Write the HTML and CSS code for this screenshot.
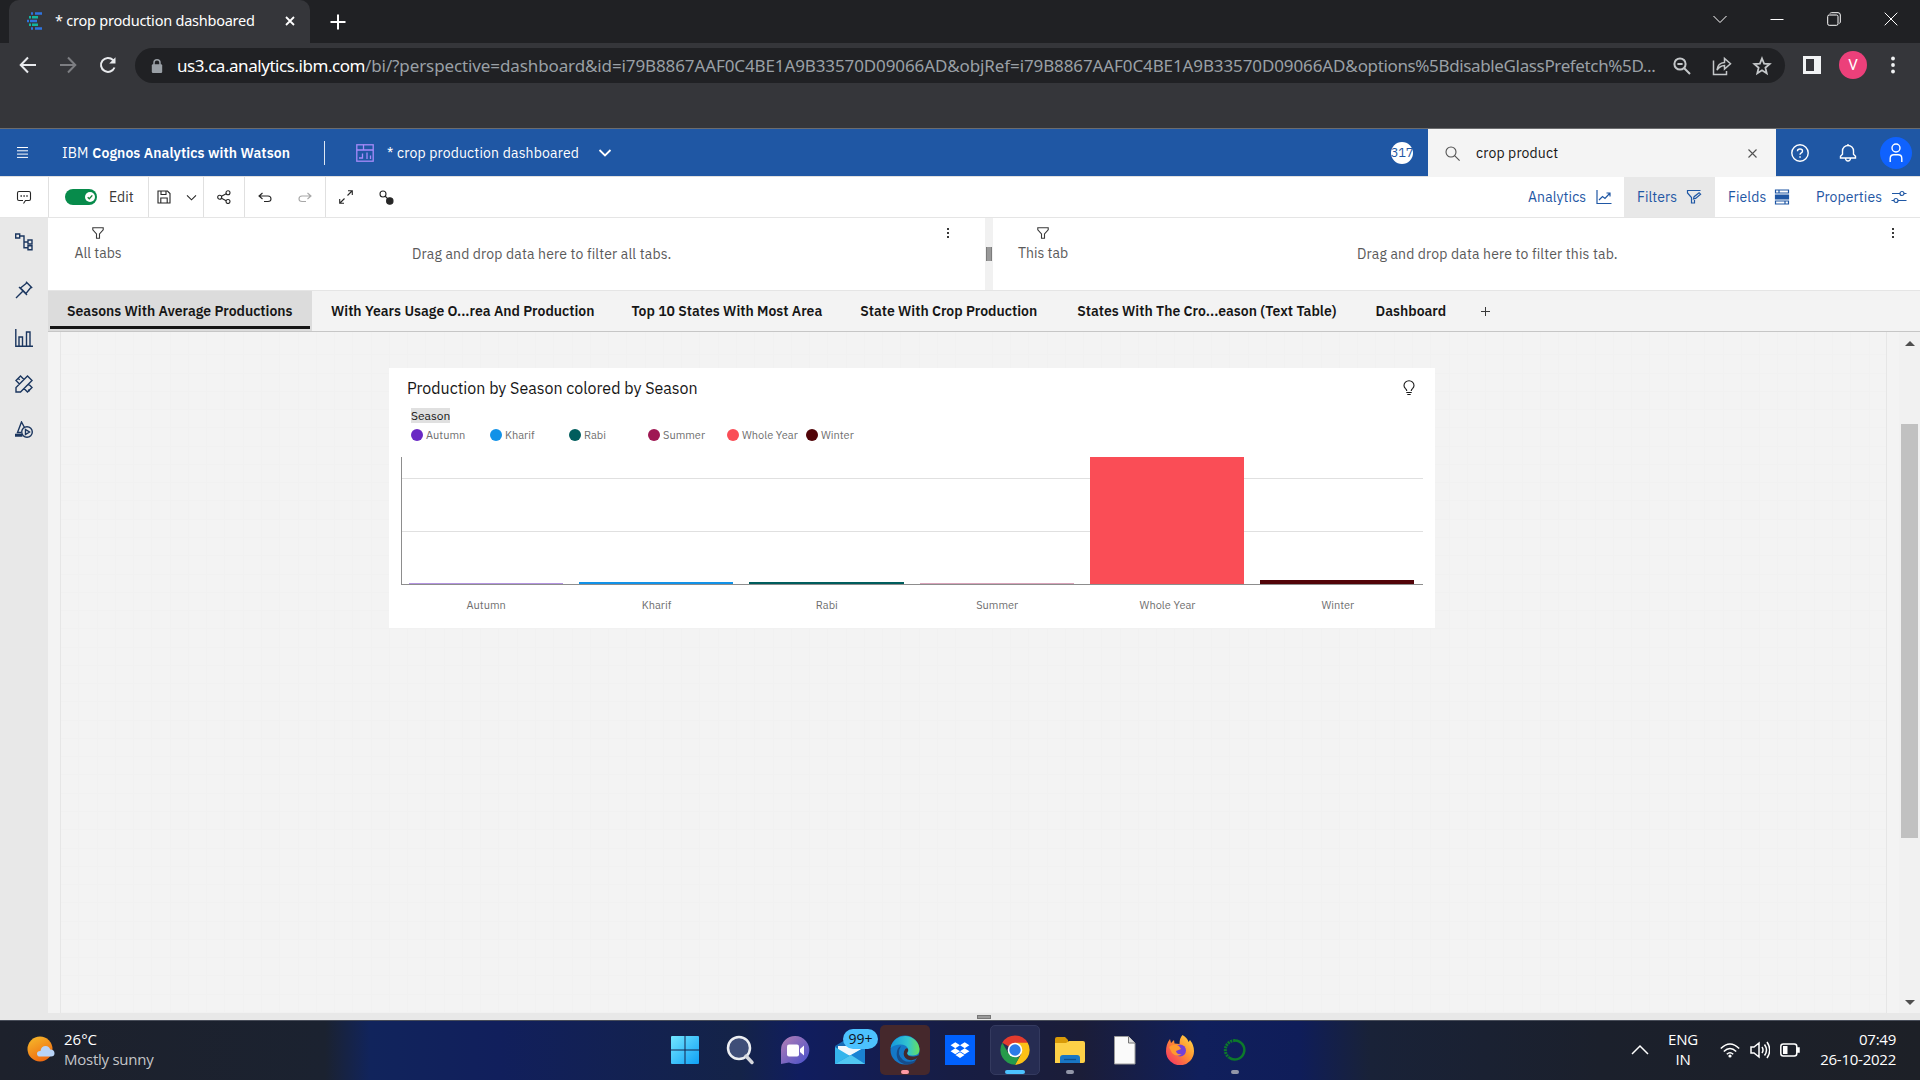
FILE: index.html
```html
<!DOCTYPE html>
<html lang="en">
<head>
<meta charset="utf-8">
<title>* crop production dashboared</title>
<link rel="stylesheet" href="styles.css">
</head>
<body>
<header class="tabstrip">
  <div class="btab">
    <svg class="favicon" width="18" height="18" viewBox="0 0 18 18"><path d="M5 1.500h2M9 1.500h7M5 16.500h2M9 16.500h7M1 9h2M4 9h7" stroke="#2f74e0" stroke-width="2.600"/><path d="M3 5.200h2M6 5.200h6M3 12.800h2M6 12.800h6" stroke="#12b5a0" stroke-width="2.600"/></svg>
    <span class="btab-title"><span class="fit t-title">* crop production dashboared</span></span>
    <svg width="10" height="10" viewBox="0 0 10 10" stroke="#fff" stroke-width="1.800"><path d="M1 1l8 8M9 1l-8 8"/></svg>
  </div>
  <svg class="newtab" width="16" height="16" viewBox="0 0 16 16" stroke="#fff" stroke-width="2"><path d="M8 .5v15M.5 8h15"/></svg>
  <div class="wincontrols">
    <svg width="14" height="14" viewBox="0 0 14 14"><path d="M.5 4l6.500 6.500L13.500 4"/></svg>
    <svg width="14" height="14" viewBox="0 0 14 14"><path d="M.5 7.500h13"/></svg>
    <svg width="14" height="14" viewBox="0 0 14 14"><rect x=".7" y="3" width="10.300" height="10.300" rx="1.500"/><path d="M3 1.500Q3.200.7 4.500.7H11q2.300 0 2.300 2.300v7q0 1-.9 1.400"/></svg>
    <svg width="14" height="14" viewBox="0 0 14 14"><path d="M.7.7l12.600 12.600M13.300.7L.7 13.300"/></svg>
  </div>
</header>
<nav class="addressrow">
  <svg class="nav-back" width="18" height="18" viewBox="0 0 18 18"><path d="M17 9H2M9 1.500L1.700 9 9 16.500"/></svg>
  <svg class="nav-fwd" width="18" height="18" viewBox="0 0 18 18"><path d="M1 9h15M9 1.500L16.300 9 9 16.500"/></svg>
  <svg class="nav-reload" width="18" height="18" viewBox="0 0 18 18"><path d="M15.500 11.500A7 7 0 1 1 14 4l1.500 1.500"/><path d="M16.500 1.200v6.300h-6.300z" fill="#e8eaed" stroke="none"/></svg>
  <div class="omnibox">
    <svg class="lock" width="12" height="14" viewBox="0 0 12 14"><path d="M3 6V3.800a3 3 0 0 1 6 0V6" fill="none" stroke="#9aa0a6" stroke-width="1.500"/><rect x=".8" y="5.300" width="10.400" height="8.700" rx="1.200" fill="#9aa0a6"/></svg>
    <span class="url"><span class="fit t-host">us3.ca.analytics.ibm.com</span><span class="fit t-path">/bi/?perspective=dashboard&amp;id=i79B8867AAF0C4BE1A9B33570D09066AD&amp;objRef=i79B8867AAF0C4BE1A9B33570D09066AD&amp;</span><span class="fit t-opts">options%5BdisableGlassPrefetch%5D...</span></span>
    <div class="omni-icons">
      <svg width="20" height="20" viewBox="0 0 20 20"><circle cx="8" cy="8" r="5.600"/><path d="M5.400 8h5.200M12 12l6 6"/></svg>
      <svg width="20" height="20" viewBox="0 0 20 20"><path stroke-width="1.500" d="M1.500 4.500v14h13v-3.500M5 14c.6-5 3.300-7.200 7.500-7.400V2.500l6 5.300-6 5.300V9.500C9 9.700 7 11 5 14z"/></svg>
      <svg width="20" height="20" viewBox="0 0 20 20"><path stroke-width="1.800" d="M10 2.500l2.100 5.200 5.500.4-4.200 3.600 1.300 5.500-4.700-3-4.700 3 1.300-5.500-4.200-3.600 5.500-.4z"/></svg>
    </div>
  </div>
  <svg class="sidepanel" width="18" height="18" viewBox="0 0 18 18"><path fill="#f1f3f4" fill-rule="evenodd" d="M0 0h18v18H0zM3 3v12h8V3z"/></svg>
  <span class="avatar">V</span>
  <svg class="kebab" width="4" height="18" viewBox="0 0 4 18" fill="#f1f3f4"><circle cx="2" cy="2.500" r="1.900"/><circle cx="2" cy="9" r="1.900"/><circle cx="2" cy="15.500" r="1.900"/></svg>
</nav>
<div class="bookmarks"></div>

<header class="appbar">
  <svg class="burger" width="11" height="11" viewBox="0 0 11 11" stroke="#fff"><path d="M0 .5h11M0 3.800h11M0 7.100h11M0 10.400h11"/></svg>
  <span class="brand"><span class="fit t-ibm">IBM</span><b class="fit t-brand">Cognos Analytics with Watson</b></span>
  <i class="brand-rule"></i>
  <svg class="dash-icon" width="18" height="18" viewBox="0 0 18 18" fill="none" stroke="#a78bfa" stroke-width="1.300"><rect x=".8" y=".8" width="16.400" height="16.400"/><path d="M.8 6h16.400M7.500.8V6M3 14h3.500V9.500M11 8.500V15M14.500 11.500V15"/></svg>
  <span class="doc"><span class="fit t-doc">* crop production dashboared</span></span>
  <svg class="doc-caret" width="14" height="14" viewBox="0 0 14 14" fill="none" stroke="#fff" stroke-width="1.800"><path d="M1.500 4l5.500 5.500L12.500 4"/></svg>
  <span class="count"><span>317</span></span>
  <div class="search">
    <svg width="15" height="15" viewBox="0 0 15 15" fill="none" stroke="#525252" stroke-width="1.100"><circle cx="6" cy="6" r="5"/><path d="M9.600 9.600l5 5"/></svg>
    <span class="query"><span class="fit t-query">crop product</span></span>
    <svg width="9" height="9" viewBox="0 0 9 9" stroke="#525252" stroke-width="1.100"><path d="M.5.5l8 8M8.500.5l-8 8"/></svg>
  </div>
  <div class="userbar">
    <svg width="18" height="18" viewBox="0 0 18 18"><circle cx="9" cy="9" r="8.200"/><path d="M6.500 7.300V7q0-2 2.500-2t2.500 2q0 1.200-1.200 1.900T9 10.800"/><path d="M8.300 13h1.500" stroke-width="1.600"/></svg>
    <svg width="18" height="18" viewBox="0 0 18 18"><path d="M9 0v2M1.500 14v-1.800l2-2V7a5.500 5.500 0 0 1 11 0v3.200l2 2V14zM6.500 14.500q.3 2.500 2.500 2.500t2.500-2.500"/></svg>
    <span class="user"><svg width="14" height="20" viewBox="0 0 14 20"><circle cx="7" cy="5" r="4"/><path d="M1.200 19v-3.500q0-3.700 3.700-3.700h4.200q3.700 0 3.700 3.700V19"/></svg></span>
  </div>
</header>

<div class="toolbar">
  <span class="cell c-chat"><svg width="16" height="16" viewBox="0 0 16 16"><path d="M7.500 14.500l2-3H13q1.500 0 1.500-1.500V4q0-1.500-1.500-1.500H3Q1.500 2.500 1.500 4v6q0 1.500 1.500 1.500h4"/><path d="M4.500 7h1.400M7.400 7h1.400M10.300 7h1.400" stroke-width="1.400"/></svg></span>
  <span class="cell c-edit"><i class="toggle"><svg width="12" height="12" viewBox="0 0 12 12"><circle cx="6" cy="6" r="5" fill="#fff" stroke="none"/><path d="M3.700 6.200l1.600 1.600 3-3.400" stroke="#198038" stroke-width="1.400"/></svg></i><span class="fit t-edit">Edit</span></span>
  <span class="cell c-save"><svg width="14" height="14" viewBox="0 0 14 14"><path d="M1 1h9.500L13 3.500V13H1zM4 1v3.500h5V1M3.800 13V8h6.400v5"/></svg><svg width="11" height="11" viewBox="0 0 11 11"><path d="M1 3.300l4.500 4.500L10 3.300"/></svg></span>
  <span class="cell c-share"><svg width="14" height="14" viewBox="0 0 14 14"><circle cx="11" cy="2.700" r="2"/><circle cx="2.700" cy="7.200" r="2"/><circle cx="11" cy="11.500" r="2"/><path d="M4.500 6.200l4.700-2.500M4.500 8.200l4.700 2.500"/></svg></span>
  <span class="cell c-undo"><svg width="14" height="11" viewBox="0 0 14 11"><path d="M4.500 1L1 4l3.500 3M1 4h9q3 0 3 3 0 2.500-3 2.500H6"/></svg><svg class="dim" width="14" height="11" viewBox="0 0 14 11"><path d="M9.500 1L13 4 9.500 7M13 4H4Q1 4 1 7q0 2.500 3 2.500h4"/></svg></span>
  <span class="cell c-view"><svg width="14" height="14" viewBox="0 0 14 14"><path d="M9 .7h4.300V5M5 13.300H.7V9M13 1L8.500 5.500M1 13l4.500-4.500"/></svg><svg width="15" height="15" viewBox="0 0 15 15"><circle cx="4" cy="4" r="3"/><path d="M6 6l3 3"/><circle cx="10.800" cy="11" r="3.200" fill="#262626"/></svg></span>
  <div class="panels">
    <span class="panel p-an"><span class="fit t-an">Analytics</span><svg width="16" height="16" viewBox="0 0 16 16"><path d="M1 1v13.500h14.500M3 11l3.500-3.500 2.500 2L14 4M10.500 4H14v3.500"/></svg></span>
    <span class="panel p-fi on"><span class="fit t-fi">Filters</span><svg width="16" height="16" viewBox="0 0 16 16"><path d="M14.500 1.500h-13v2.500L5.500 8.500V14h3v-3M7.500 10l.6-2.300 5-4 1.500 1.500-5 4.200z"/></svg></span>
    <span class="panel p-fd"><span class="fit t-fd">Fields</span><svg width="16" height="16" viewBox="0 0 16 16"><path fill="#1f57a4" d="M1.500 6h13v4h-13z"/><path d="M1.500 1h13v3h-13zM1.500 12h13v3h-13zM5 1v3M11 12v3"/></svg></span>
    <span class="panel p-pr"><span class="fit t-pr">Properties</span><svg width="16" height="16" viewBox="0 0 16 16"><path d="M1 4.500h8M13 4.500h2.500M.5 11.500H3M7 11.500h8.500"/><circle cx="11" cy="4.500" r="2"/><circle cx="5" cy="11.500" r="2"/></svg></span>
  </div>
</div>

<main class="workspace">
  <aside class="rail">
    <svg width="18" height="18" viewBox="0 0 18 18"><path d="M.7 1h4v4h-4zM4.700 3H9v11.700h4M9 9h4M13 7h4v4h-4zM13 12.800h4v4h-4z"/></svg>
    <svg width="18" height="18" viewBox="0 0 18 18"><path d="M11 .8l6.200 6.200M12 1.800L5.500 7 11 12.500l5.200-6.500M4 6l8 8M1 17l6.500-6.500"/></svg>
    <svg width="18" height="18" viewBox="0 0 18 18"><path d="M.8 0v17.200H18M4 17V8h3.500v9M11.500 17V3H15v14"/></svg>
    <svg width="18" height="18" viewBox="0 0 18 18"><path d="M1 17v-4.500L12.500 1 17 5.500 5.500 17zM7 6.500L4.500 9 1 5.500 5.500 1 9 4.500M3.200 3.300l1.500 1.500M11.500 11L9 13.500l3.500 3.500 4.500-4.500L13.500 9M13.200 14.700l1.500 1.500"/></svg>
    <svg width="18" height="18" viewBox="0 0 18 18"><path d="M6 11.500H2.500L6.500 1l3 5.500M.7 13.500h6v1.500h-6z"/><circle cx="12" cy="11" r="5.300"/><path d="M10.500 8.500v5l4-2.500z"/></svg>
  </aside>
  <section class="stage">
    <div class="filters">
      <div class="filter f-all">
        <div class="flabel"><svg width="12" height="12" viewBox="0 0 12 12"><path d="M.8.8h10.400v2L7.500 7v4.300h-3V7L.8 2.800z"/></svg><span class="fit t-all">All tabs</span></div>
        <span class="drop"><span class="fit t-d1">Drag and drop data here to filter all tabs.</span></span>
        <i class="dots"></i>
      </div>
      <i class="splitter"></i>
      <div class="filter f-this">
        <div class="flabel"><svg width="12" height="12" viewBox="0 0 12 12"><path d="M.8.8h10.400v2L7.500 7v4.300h-3V7L.8 2.800z"/></svg><span class="fit t-this">This tab</span></div>
        <span class="drop"><span class="fit t-d2">Drag and drop data here to filter this tab.</span></span>
        <i class="dots"></i>
      </div>
    </div>
    <nav class="tabs">
      <span class="tab active"><span class="fit t-1">Seasons With Average Productions</span></span>
      <span class="tab w2"><span class="fit t-2">With Years Usage O...rea And Production</span></span>
      <span class="tab w3"><span class="fit t-3">Top 10 States With Most Area</span></span>
      <span class="tab w4"><span class="fit t-4">State With Crop Production</span></span>
      <span class="tab w5"><span class="fit t-5">States With The Cro...eason (Text Table)</span></span>
      <span class="tab w6"><span class="fit t-6">Dashboard</span></span>
      <svg class="addtab" width="9" height="9" viewBox="0 0 9 9" stroke="#393939"><path d="M4.500 0v9M0 4.500h9"/></svg>
    </nav>
    <div class="canvas">
      <div class="grid">
        <article class="card">
          <div class="card-head"><h1><span class="fit t-h1">Production by Season colored by Season</span></h1>
            <svg width="12" height="16" viewBox="0 0 12 16" fill="none" stroke="#161616" stroke-width="1.100"><path d="M3.800 11q0-1.300-1.500-2.700Q1 7 1 5.500a5 4.700 0 0 1 10 0Q11 7 9.700 8.300 8.200 9.700 8.200 11M3.300 12.500h5.400M4.300 14.500h3.400"/></svg></div>
          <div class="legend-title"><span class="fit t-sea">Season</span></div>
          <ul class="legend">
            <li><i class="autumn"></i><span class="fit l-1">Autumn</span></li>
            <li><i class="kharif"></i><span class="fit l-2">Kharif</span></li>
            <li><i class="rabi"></i><span class="fit l-3">Rabi</span></li>
            <li><i class="summer"></i><span class="fit l-4">Summer</span></li>
            <li><i class="whole"></i><span class="fit l-5">Whole Year</span></li>
            <li><i class="winter"></i><span class="fit l-6">Winter</span></li>
          </ul>
          <div class="plot">
            <div class="slot"><i class="bar autumn" style="height:1px;opacity:.5"></i></div>
            <div class="slot"><i class="bar kharif" style="height:2px"></i></div>
            <div class="slot"><i class="bar rabi" style="height:2px"></i></div>
            <div class="slot"><i class="bar summer" style="height:1px;opacity:.4"></i></div>
            <div class="slot"><i class="bar whole" style="height:127px"></i></div>
            <div class="slot"><i class="bar winter" style="height:4px"></i></div>
          </div>
          <div class="xaxis">
            <span><span class="fit l-1">Autumn</span></span><span><span class="fit l-2">Kharif</span></span><span><span class="fit l-3">Rabi</span></span><span><span class="fit l-4">Summer</span></span><span><span class="fit l-5">Whole Year</span></span><span><span class="fit l-6">Winter</span></span>
          </div>
        </article>
      </div>
      <div class="scroll"><i class="up"></i><i class="thumb"></i><i class="down"></i></div>
    </div>
  </section>
</main>
<div class="dock"><i></i></div>

<footer class="taskbar">
  <div class="weather">
    <svg width="28" height="26" viewBox="0 0 28 26"><defs><linearGradient id="sun" x2=".5" y2="1"><stop stop-color="#f6bd2c"/><stop offset="1" stop-color="#ef6c12"/></linearGradient></defs><circle cx="13" cy="13" r="12.500" fill="url(#sun)"/><path d="M13 20.500q-3 0-3-2.800t3.500-2.700q.7-5 5.200-5 3.500 0 4.500 3.500 4.300.2 4.300 3.700 0 3.300-3.500 3.300z" fill="#b9d3f7"/></svg>
    <div class="wtext"><span class="fit t-temp">26°C</span><span class="fit t-sunny">Mostly sunny</span></div>
  </div>
  <div class="apps">
    <span class="app"><svg width="30" height="30" viewBox="0 0 30 30"><defs><linearGradient id="win" x2="1" y2="1"><stop stop-color="#73e6ff"/><stop offset="1" stop-color="#0fa0f5"/></linearGradient></defs><path fill="url(#win)" d="M2 1h12.500v13.500H1V2q0-1 1-1zM15.500 1H28q1 0 1 1v12.500H15.500zM1 15.500h13.500V29H2q-1 0-1-1zM15.500 15.500H29V28q0 1-1 1H15.500z"/></svg></span>
    <span class="app"><svg width="30" height="30" viewBox="0 0 30 30"><circle cx="14" cy="13" r="11" fill="#3f4e78" stroke="#eceef2" stroke-width="2.500"/><path d="M21 21l6 6.500" stroke="#d5d7dd" stroke-width="3.500" stroke-linecap="round"/></svg></span>
    <span class="app"><svg width="30" height="30" viewBox="0 0 30 30"><defs><linearGradient id="meet" x2="1" y2="1"><stop stop-color="#b57fb3"/><stop offset="1" stop-color="#4650cc"/></linearGradient></defs><path fill="url(#meet)" d="M15 1a14 14 0 1 1-6 26.500L1 29V15A14 14 0 0 1 15 1z"/><rect x="7" y="9.500" width="12" height="12" rx="2" fill="#fff"/><path d="M20 14l4-3.500v10L20 17z" fill="#fff"/></svg></span>
    <span class="app"><svg width="30" height="30" viewBox="0 0 30 30"><path d="M0 11L15 2l15 9v18H0z" fill="#1769b4"/><path d="M3 11h24v5L15 21 3 16z" fill="#f2f6fb"/><path d="M0 12l15 9 15-9v17H0z" fill="#35b5ec"/><path d="M0 29L30 12v17z" fill="#1a82d3"/><path d="M0 29l16-9 14 9z" fill="#51c7f2"/></svg><b class="badge"><span class="fit t-99">99+</span></b></span>
    <span class="app edge"><svg width="30" height="30" viewBox="0 0 30 30"><defs><linearGradient id="ed" x2="1"><stop stop-color="#1598dc"/><stop offset=".6" stop-color="#32c5cf"/><stop offset="1" stop-color="#67e05c"/></linearGradient></defs><circle cx="15" cy="15" r="14.500" fill="#1478c8"/><path d="M.8 12A14.600 14.600 0 0 1 29.500 14q.2 7-7.500 6.500-5 0-5-2.500 2-1.500 1-4.500-2-4-7.500-4Q4 9.500.8 13z" fill="url(#ed)"/><path d="M11 11q-5 8 2 14 6 3.800 13.500-.2L24 28q-4 2-8 1.600Q5 27 7 16q1-4 4-5z" fill="#174d8b"/><path d="M17 18q.5 4 7 3.500 3.500-.2 4.500-1.500 1 .8-1 3-4.500 3.300-10 1.500-5-2.500-3.500-8 1.500-4 3.500-3 1.500 1.500-.5 4.500z" fill="#45282c"/></svg><i class="run pink"></i></span>
    <span class="app"><svg width="30" height="30" viewBox="0 0 30 30"><path fill="#0061fe" d="M0 0h30v30H0z"/><path fill="#fff" d="M10.300 7.200l4.700 3-4.700 3-4.700-3zM19.700 7.200l4.700 3-4.700 3-4.700-3zM10.300 13.200l4.700 3-4.700 3-4.700-3zM19.700 13.200l4.700 3-4.700 3-4.700-3zM15 17.200l4.500 2.900-4.500 2.900-4.500-2.900z"/></svg></span>
    <span class="app chrome"><svg width="30" height="30" viewBox="0 0 30 30"><path fill="#e33b2e" d="M15 15L2.300 7.700A14.700 14.700 0 0 1 27.700 7.700z"/><path fill="#fbc116" d="M15 7.700h12.700A14.700 14.700 0 0 1 15 29.700l6.300-11z"/><path fill="#269b4b" d="M2.300 7.700L8.700 18.700 15 22.300h4.200L15 29.700A14.700 14.700 0 0 1 2.300 7.700z"/><circle cx="15" cy="15" r="7.300" fill="#fff"/><circle cx="15" cy="15" r="5.700" fill="#2c7be9"/></svg><i class="run wide"></i></span>
    <span class="app"><svg width="30" height="30" viewBox="0 0 30 30"><path fill="#d99a08" d="M0 4q0-2 2-2h8l3 3v6H0z"/><path fill="#fdd047" d="M0 8h11l3-2h14q2 0 2 2v18q0 2-2 2H0z"/><path fill="#1976c5" d="M5 28v-5q0-3 3-3h14q3 0 3 3v5z"/><path d="M9 24.500h12" stroke="#0b4f91" stroke-width="1.300"/></svg><i class="run"></i></span>
    <span class="app"><svg width="30" height="30" viewBox="0 0 30 30"><path fill="#fafafa" stroke="#9b9b9b" d="M4.500 1.500h14L25 8v21H4.500z"/><path d="M18.500 1.500V8H25" fill="#ddd" stroke="#777"/></svg></span>
    <span class="app"><svg width="30" height="30" viewBox="0 0 30 30"><defs><linearGradient id="ff" x1="1" x2="0" y2="1"><stop stop-color="#ffe14a"/><stop offset=".45" stop-color="#ff9130"/><stop offset="1" stop-color="#f4246d"/></linearGradient></defs><path fill="url(#ff)" d="M17.500 0q5 3 6 7l1.500-2q4 5 4 11a14 14 0 0 1-28 .5Q1 9 5 4l1 4 3-3 .5 3.500 5 .5q0-6 3-9z"/><circle cx="15" cy="15.500" r="6" fill="#7440d6"/><path d="M4 12q5-4 10-1l2 3-5 2q1 4 6 3-5 4-10-1z" fill="#ff9a2f"/></svg></span>
    <span class="app"><svg width="30" height="30" viewBox="0 0 30 30" fill="none" stroke="#0d7a2b"><path stroke-width="2.500" d="M15 5.500a9.500 9.500 0 1 1-6 17"/><path stroke-width="3" stroke-dasharray="2 .8" d="M15 5.500a9.500 9.500 0 0 0-6 17"/></svg><i class="run"></i></span>
  </div>
  <div class="tray">
    <svg width="18" height="12" viewBox="0 0 18 12"><path d="M1 10l8-8 8 8"/></svg>
    <div class="lang"><span class="fit t-eng">ENG</span><span class="fit t-in">IN</span></div>
    <svg class="wifi" width="20" height="18" viewBox="0 0 20 18"><path d="M.8 7.500q9.200-9 18.400 0M3.800 10.500q6.200-6 12.400 0M6.800 13.300q3.200-3 6.400 0"/><circle cx="10" cy="15" r="1.600" fill="#fff" stroke="none"/></svg>
    <svg class="vol" width="20" height="18" viewBox="0 0 20 18"><path d="M1 6h3l5-4v14l-5-4H1zM12 6q2 3 0 6M14.500 3.500q4 5.500 0 11M17 1q5.500 8 0 16"/></svg>
    <svg class="bat" width="20" height="14" viewBox="0 0 20 14"><rect x=".8" y="1" width="16" height="12" rx="2.500"/><path d="M17.500 5h1.500v4h-1.500z"/><path fill="#fff" stroke="none" d="M3 3h4.500v8H3z"/></svg>
    <div class="clock"><span class="fit t-time">07:49</span><span class="fit t-date">26-10-2022</span></div>
  </div>
</footer>
</body>
</html>
```
FILE: styles.css
```css
* { box-sizing: border-box; }
body { margin: 0; width: 1920px; height: 1080px; overflow: hidden; font-family: "Noto Sans", sans-serif; display: flex; flex-direction: column; background: #f3f3f3; }
svg { flex: none; display: block; }
.fit { white-space: nowrap; }

.tabstrip { height: 43px; background: #202124; display: flex; align-items: center; flex: none; }
.btab { width: 301px; height: 43px; margin-left: 9px; padding: 0 0 2px 17px; display: flex; align-items: center; background: #35363a; border-radius: 10px 10px 0 0; }
.btab-title { width: 230px; margin-left: 11px; font-size: 14.500px; letter-spacing: -0.230px; color: #fff; padding-bottom: 1px; }
.newtab { margin-left: 20px; }
.wincontrols { margin-left: auto; margin-right: 22px; display: flex; gap: 43px; padding-bottom: 6px; }
.wincontrols svg { fill: none; stroke: #fff; }
.addressrow { height: 43px; flex: none; background: #35363a; display: flex; align-items: center; padding-left: 19px; }
.addressrow > svg { fill: none; stroke: #e8eaed; stroke-width: 2; }
.nav-fwd { margin-left: 22px; opacity: .4; }
.nav-reload { margin: 0 18px 0 22px; }
.omnibox { width: 1650px; height: 35px; margin-top: 2px; background: #202124; border-radius: 18px; padding: 0 13px 0 16px; display: flex; align-items: center; }
.url { margin-left: 14px; font-size: 17px; color: #9aa0a6; white-space: nowrap; width: 1482px; }
.t-host { color: #fff; letter-spacing: -0.450px; }
.t-path { letter-spacing: -0.110px; }
.t-opts { letter-spacing: -0.360px; }
.omni-icons { display: flex; gap: 20px; margin-left: auto; }
.omni-icons svg { fill: none; stroke: #c4c7c9; stroke-width: 2; }
.addressrow .sidepanel { margin-left: 18px; stroke: none; }
.avatar { width: 28px; height: 28px; margin-left: 18px; border-radius: 50%; background: #ec407a; color: #fff; font: 15px/28px Roboto, sans-serif; text-align: center; }
.addressrow .kebab { margin-left: 24px; fill: #f1f3f4; stroke: none; }
.bookmarks { height: 43px; flex: none; background: #35363a; border-bottom: 1px solid #6b6c6e; }

.appbar, .toolbar, .filters, .tabs, .card { font-family: "IBM Plex Sans", "Noto Sans", sans-serif; }
.appbar { height: 47px; flex: none; background: #1f57a4; display: flex; align-items: center; color: #fff; font-size: 14px; }
.burger { margin-left: 17px; }
.brand { margin-left: 34px; width: 262px; display: flex; gap: 4px; letter-spacing: .080px; }
.brand b { font-weight: 600; }
.brand-rule { width: 1px; height: 24px; background: #dce6f3; }
.dash-icon { margin-left: 31px; }
.doc { margin-left: 13px; width: 211px; letter-spacing: .170px; }
.count { margin-left: auto; width: 22px; height: 22px; border-radius: 50%; background: #fff; color: #1f57a4; display: flex; justify-content: center; align-items: center; font-size: 13px; letter-spacing: -0.300px; margin-right: 15px; }
.search { width: 348px; height: 48px; align-self: flex-start; background: #f4f4f4; color: #161616; display: flex; align-items: center; padding: 0 19px 0 17px; z-index: 1; }
.query { margin-left: 16px; flex: 1; letter-spacing: .150px; }
.userbar { width: 144px; height: 47px; display: flex; align-items: center; padding-left: 15px; gap: 30px; }
.userbar svg { fill: none; stroke: #fff; stroke-width: 1.400; }
.user { width: 32px; height: 32px; margin-left: -7px; border-radius: 50%; background: #0f62fe; display: flex; align-items: center; justify-content: center; }

.toolbar { height: 42px; flex: none; background: #fff; border-top: 1px solid #e0e0e0; border-bottom: 1px solid #e5e5e5; display: flex; font-size: 14px; color: #393939; }
.cell { display: flex; align-items: center; border-right: 1px solid #e0e0e0; }
.cell svg { fill: none; stroke: #262626; stroke-width: 1.100; }
.c-chat { width: 49px; padding-left: 16px; }
.c-edit { width: 100px; padding-left: 16px; gap: 12px; }
.toggle { width: 32px; height: 16px; border-radius: 8px; background: #078b4b; padding: 2px 1px; display: flex; justify-content: flex-end; }
.c-save { width: 55px; padding-left: 8px; gap: 15px; }
.c-share { width: 41px; padding-left: 13px; }
.c-undo { width: 81px; padding-left: 13px; gap: 26px; }
.dim { opacity: .4; }
.c-view { border: 0; padding-left: 13px; gap: 26px; }
.panels { margin-left: auto; display: flex; color: #1f57a4; letter-spacing: .100px; }
.panel { display: flex; align-items: center; justify-content: space-between; }
.panel svg { fill: none; stroke: #1f57a4; stroke-width: 1.200; }
.p-an { width: 97px; margin-right: 12px; padding-left: 13px; }
.p-fi { width: 91px; padding: 0 13px; }
.p-fd { width: 87px; padding: 0 12px 0 13px; }
.p-pr { width: 118px; padding: 0 13px 0 14px; }
.on { background: #e8e8e8; }

.workspace { flex: none; height: 795px; display: flex; }
.rail { width: 48px; background: #e8e8e8; padding: 15px 0 0 15px; }
.rail svg { fill: none; stroke: #1b365f; stroke-width: 1.400; margin-bottom: 30px; }
.rail svg:nth-child(3) { margin-bottom: 28px; }
.rail svg:nth-child(4) { margin-bottom: 28px; }
.stage { width: 1872px; display: flex; flex-direction: column; }
.filters { height: 73px; background: #fff; border-bottom: 1px solid #e5e5e5; display: flex; font-size: 14px; color: #5a5a5a; letter-spacing: .150px; }
.filter { display: flex; }
.f-all { width: 937px; }
.f-this { flex: 1; }
.flabel { width: 100px; padding-top: 9px; display: flex; flex-direction: column; align-items: center; line-height: 18px; gap: 5px; letter-spacing: 0; }
.flabel svg { fill: none; stroke: #393939; stroke-width: 1.100; }
.drop { flex: 1; padding: 27px 0 0 264px; line-height: 18px; }
.dots { width: 2px; height: 10px; margin: 10px 36px 0 0; background: repeating-linear-gradient(#393939 0 2px, transparent 2px 4px); }
.f-this .dots { margin-right: 26px; }
.splitter { width: 8px; background: #f1f1f1; display: flex; align-items: center; justify-content: center; }
.splitter::before { content: ""; width: 4px; height: 14px; border: 1px solid #7c7c7c; border-width: 0 1px; background: #999; }
.tabs { height: 41px; background: #f3f3f3; border-bottom: 1px solid #c6c6c6; display: flex; align-items: center; font-size: 14px; font-weight: 600; color: #161616; }
.tab { height: 40px; padding: 0 19px 0 18px; display: flex; align-items: center; }
.active { width: 264px; background: #dcdcdc; border: 2px solid #dcdcdc; box-shadow: inset 0 -3px #161616; padding: 0 17px; }
.w2 { padding-left: 19px; padding-right: 19px; }
.w4 { padding-left: 19px; padding-right: 20px; }
.w5 { padding-left: 20px; padding-right: 19px; letter-spacing: .020px; }
.w6 { padding-left: 20px; }
.addtab { margin-left: 16px; }
.canvas { height: 681px; display: flex; }
.grid { width: 1851px; padding: 36px 0 0 341px; background: linear-gradient(90deg, #f3f3f3 12px, #e6e6e6 12px 13px, transparent 13px 1838px, #e6e6e6 1838px 1839px, #f3f3f3 1839px), repeating-linear-gradient(90deg, transparent 0 17.270px, #f1f1f1 17.270px 18.270px) 13px 0, repeating-linear-gradient(transparent 0 17.270px, #f1f1f1 17.270px 18.270px) 0 5px, #f3f3f3; }
.scroll { width: 21px; background: #f1f1f1; display: flex; flex-direction: column; align-items: center; padding: 9px 0 0; }
.up, .down { border: solid transparent; border-width: 0 5px; }
.up { border-bottom: 5px solid #4f4f4f; }
.down { border-top: 5px solid #4f4f4f; }
.thumb { width: 17px; height: 414px; background: #c1c1c1; margin: 78px 0 162px; }

.card { width: 1046px; height: 260px; background: #fff; padding: 0 12px; }
.card-head { height: 40px; display: flex; justify-content: space-between; padding: 12px 8px 0 6px; }
h1 { margin: -1px 0 0; font-size: 16px; font-weight: 400; line-height: 18px; color: #161616; }
.legend-title { margin-left: 10px; width: 39px; height: 15px; background: #e0e0e0; font-size: 12px; line-height: 15px; color: #161616; }
.legend { list-style: none; display: flex; margin: 4px 0 0 10px; padding: 0; height: 16px; font-size: 11px; color: #6f6f6f; }
.legend li { width: 79px; display: flex; align-items: center; gap: 3px; }
.legend li i { width: 12px; height: 12px; border-radius: 50%; flex: none; }
.autumn { background: #6929c4; } .kharif { background: #1192e8; } .rabi { background: #005d5d; } .summer { background: #9f1853; } .whole { background: #fa4d56; } .winter { background: #520408; }
.plot { width: 1022px; height: 128px; margin-top: 14px; border-left: 1px solid #8d8d8d; border-bottom: 1px solid #8d8d8d; display: flex; background: linear-gradient(#e0e0e0, #e0e0e0) 0 21px/100% 1px no-repeat, linear-gradient(#e0e0e0, #e0e0e0) 0 74px/100% 1px no-repeat; }
.slot { flex: 1; padding: 0 9px 0 7px; display: flex; align-items: flex-end; }
.bar { width: 100%; }
.xaxis { display: flex; padding-top: 11px; font-size: 11px; line-height: 18px; color: #6f6f6f; }
.xaxis > span { flex: 1; text-align: center; }
.dock { height: 7px; flex: none; background: #e8e8e8; padding: 2px 0 0 977px; }
.dock i { display: block; width: 14px; height: 4px; background: #999; border: 1px solid #777; }

.taskbar { height: 60px; flex: none; border-top: 1px solid #484d59; background: linear-gradient(90deg, #1d212c 0, #1b2230 325px, #11245c 370px, #111f5c 500px, #142348 740px, #101d5f 800px, #171d44 950px, #1b1d38 1080px, #101f5c 1200px, #0f1d59 1300px, #192238 1370px, #1b202c 1600px, #1d2027 1920px); color: #fff; font-family: "Open Sans", sans-serif; font-size: 15px; display: flex; align-items: center; padding-bottom: 1px; }
.weather { width: 660px; padding-left: 27px; display: flex; align-items: center; gap: 9px; padding-bottom: 2px; }
.wtext, .lang, .clock { display: flex; flex-direction: column; line-height: 20px; }
.wtext { align-items: flex-start; padding-bottom: 1px; }
.t-sunny { color: #c4c5c9; letter-spacing: -0.250px; }
.apps { display: flex; gap: 5px; }
.app { width: 50px; height: 50px; border-radius: 5px; display: flex; align-items: center; justify-content: center; position: relative; }
.edge { background: #45282c; }
.chrome { background: #262c52; border: 1px solid #343a5f; }
.run { position: absolute; left: 50%; bottom: 1px; width: 8px; height: 4px; margin-left: -4px; border-radius: 2px; background: #9296a8; }
.pink { background: #ff99a4; }
.wide { width: 20px; margin-left: -10px; background: #4cc2ff; bottom: 0; }
.badge { position: absolute; left: 18px; top: 4px; width: 35px; height: 20px; border-radius: 10px; background: #4cc2ff; color: #10131c; font-size: 14px; font-weight: 400; line-height: 20px; text-align: center; z-index: 1; }
.tray { margin-left: auto; display: flex; align-items: center; padding-right: 24px; }
.tray svg { fill: none; stroke: #fff; stroke-width: 1.500; }
.lang { width: 30px; margin: 0 22px 0 19px; align-items: center; padding-bottom: 2px; letter-spacing: -0.200px; }
.vol { margin: 0 10px; }
.clock { width: 76px; margin-left: 20px; align-items: flex-end; padding-bottom: 3px; letter-spacing: -0.250px; }
```
